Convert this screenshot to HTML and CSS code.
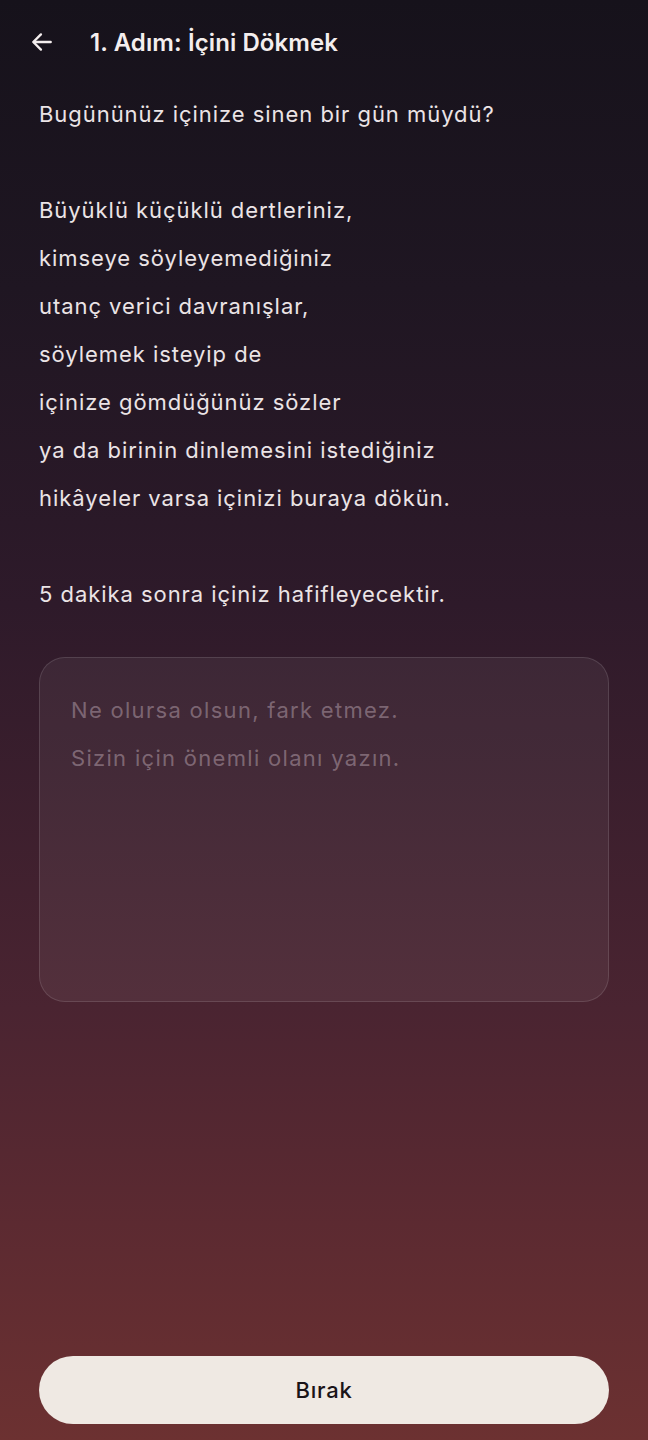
FILE: index.html
```html
<!DOCTYPE html>
<html lang="tr">
<head>
<meta charset="utf-8">
<link rel="stylesheet" href="styles.css">
</head>
<body>
<div class="screen">
  <header class="topbar">
    <svg class="back" width="26" height="26" viewBox="0 0 24 24" fill="none" stroke="#f4eeee" stroke-width="2.2" stroke-linecap="round" stroke-linejoin="round"><path d="M20 12H4.5"/><path d="M11 5l-7 7 7 7"/></svg>
    <h1 class="title">1. Adım: İçini Dökmek</h1>
  </header>
  <main class="content">
    <p class="intro">Bugününüz içinize sinen bir gün müydü?<br><br>Büyüklü küçüklü dertleriniz,<br>kimseye söyleyemediğiniz<br>utanç verici davranışlar,<br>söylemek isteyip de<br>içinize gömdüğünüz sözler<br>ya da birinin dinlemesini istediğiniz<br>hikâyeler varsa içinizi buraya dökün.<br><br>5 dakika sonra içiniz hafifleyecektir.</p>
    <textarea class="entry" placeholder="Ne olursa olsun, fark etmez.&#10;Sizin için önemli olanı yazın."></textarea>
  </main>
  <footer class="actions">
    <button class="release">Bırak</button>
  </footer>
</div>
</body>
</html>
```
FILE: styles.css
```css
* { box-sizing: border-box; }
html, body { margin: 0; padding: 0; }
body {
  font-family: Inter, "Noto Sans", sans-serif;
  background: linear-gradient(180deg, #16121b 0%, #1f1622 20%, #2e1a2a 42%, #4a2431 70%, #5c2a31 85%, #6c3131 100%);
  min-height: 1440px;
  color: #ece6e8;
}
.screen {
  height: 1440px;
  display: flex;
  flex-direction: column;
}
.topbar {
  display: flex;
  align-items: center;
  height: 84px;
  padding-left: 29px;
  gap: 35px;
}
.back { flex: none; }
.title {
  margin: 0;
  font-size: 24px;
  font-weight: 600;
  color: #f4eeee;
  letter-spacing: 0.1px;
}
.content {
  padding: 6px 39px 0 39px;
  display: flex;
  flex-direction: column;
  flex: 1;
}
.intro {
  margin: 0;
  font-size: 22px;
  line-height: 48px;
  color: #ebe4e6;
  letter-spacing: 0.95px;
}
.entry {
  margin-top: 39px;
  height: 345px;
  width: 100%;
  resize: none;
  border-radius: 26px;
  border: 1.5px solid rgba(255,255,255,0.12);
  background: rgba(255,255,255,0.055);
  padding: 28px 31px;
  font-family: Inter, "Noto Sans", sans-serif;
  font-size: 22px;
  line-height: 48px;
  letter-spacing: 1.3px;
  color: #ebe4e6;
  outline: none;
}
.entry::placeholder { color: rgba(255,235,245,0.33); }
.actions {
  padding: 0 39px 16px 39px;
}
.release {
  width: 100%;
  height: 68px;
  border: none;
  border-radius: 34px;
  background: #efe9e3;
  color: #1a1418;
  font-family: Inter, "Noto Sans", sans-serif;
  font-size: 22px;
  font-weight: 500;
  letter-spacing: 0.8px;
}
```
